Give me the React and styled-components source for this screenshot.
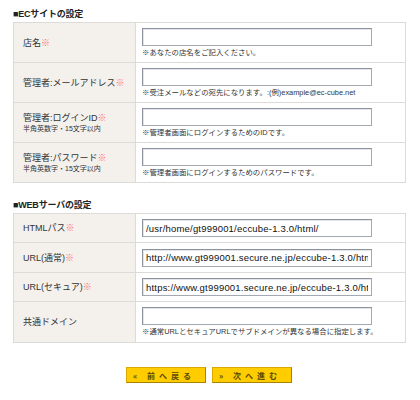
import React from "react";
import styled, { createGlobalStyle } from "styled-components";

const Global = createGlobalStyle`
  body {
    margin: 0;
    background: #ffffff;
    font-family: "Liberation Sans", "Noto Sans CJK JP", sans-serif;
    color: #333333;
  }
`;

const Page = styled.div`
  width: 420px;
  padding: 9px 0 0 13px;
  box-sizing: border-box;
`;

const Heading = styled.h2`
  margin: 0;
  height: 13px;
  font-size: 9px;
  line-height: 11px;
  font-weight: bold;
  color: #222222;
  letter-spacing: -0.2px;
`;

const Table = styled.table`
  width: 393px;
  border-collapse: collapse;
  margin-bottom: ${(p) => p.$gap || 0}px;
  td {
    border: 1px solid #dddbd8;
  }
`;

const Row = styled.tr`
  height: ${(p) => p.$h}px;
`;

const Label = styled.td`
  width: 112px;
  background: #f4f1ed;
  padding: 0 0 0 9px;
  font-size: 9px;
  line-height: 12px;
  color: #333333;
  vertical-align: middle;
`;

const Sub = styled.div`
  font-size: 7px;
  line-height: 10px;
  color: #333333;
`;

const Req = styled.span`
  color: #ff6f6f;
`;

const Field = styled.td`
  padding: 0 0 0 6px;
  vertical-align: middle;
`;

const Input = styled.input`
  display: block;
  width: 230px;
  height: 18px;
  box-sizing: border-box;
  margin: 0;
  padding: 0 3px;
  border: 1px solid #a3a9b3;
  border-top-color: #8c939e;
  border-left-color: #8c939e;
  box-shadow: inset 1px 1px 0 #e2e5ea;
  background: #ffffff;
  font-family: "Liberation Sans", sans-serif;
  font-size: 9.5px;
  letter-spacing: 0.2px;
  color: #111111;
  outline: none;
`;

const Note = styled.div`
  margin-top: 2px;
  font-size: 7.4px;
  line-height: 10px;
  color: #333333;
  white-space: nowrap;
`;

const Buttons = styled.div`
  display: flex;
  gap: 6px;
  margin: 24px 0 0 113px;
`;

const Button = styled.button`
  width: 80px;
  height: 16px;
  padding: 0 0 0 6px;
  box-sizing: border-box;
  background: #ffcc00;
  border: 1px solid #d9a900;
  border-bottom-color: #a88300;
  border-right-color: #a88300;
  font-family: "Noto Sans CJK JP", sans-serif;
  font-size: 8px;
  font-weight: bold;
  color: #5a4a00;
  text-align: left;
  letter-spacing: 4px;
  white-space: nowrap;
`;

const ecRows = [
  { label: "店名", note: "※あなたの店名をご記入ください。" },
  { label: "管理者:メールアドレス", note: "※受注メールなどの宛先になります。:(例)example@ec-cube.net" },
  { label: "管理者:ログインID", sub: "半角英数字・15文字以内", note: "※管理者画面にログインするためのIDです。" },
  { label: "管理者:パスワード", sub: "半角英数字・15文字以内", note: "※管理者画面にログインするためのパスワードです。" },
];

const webRows = [
  { label: "HTMLパス", req: true, value: "/usr/home/gt999001/eccube-1.3.0/html/", h: 29 },
  { label: "URL(通常)", req: true, value: "http://www.gt999001.secure.ne.jp/eccube-1.3.0/html/", h: 30 },
  { label: "URL(セキュア)", req: true, value: "https://www.gt999001.secure.ne.jp/eccube-1.3.0/html/", h: 29 },
  { label: "共通ドメイン", note: "※通常URLとセキュアURLでサブドメインが異なる場合に指定します。", h: 41 },
];

export default function App() {
  return (
    <Page>
      <Global />
      <Heading>■ECサイトの設定</Heading>
      <Table $gap={17}>
        <tbody>
          {ecRows.map((r) => (
            <Row key={r.label} $h={40}>
              <Label>
                {r.label}<Req>※</Req>
                {r.sub && <Sub>{r.sub}</Sub>}
              </Label>
              <Field>
                <Input defaultValue="" />
                <Note>{r.note}</Note>
              </Field>
            </Row>
          ))}
        </tbody>
      </Table>

      <Heading>■WEBサーバの設定</Heading>
      <Table>
        <tbody>
          {webRows.map((r) => (
            <Row key={r.label} $h={r.h}>
              <Label>
                {r.label}{r.req && <Req>※</Req>}
              </Label>
              <Field>
                <Input defaultValue={r.value || ""} />
                {r.note && <Note>{r.note}</Note>}
              </Field>
            </Row>
          ))}
        </tbody>
      </Table>

      <Buttons>
        <Button>« 前へ戻る</Button>
        <Button>» 次へ進む</Button>
      </Buttons>
    </Page>
  );
}
